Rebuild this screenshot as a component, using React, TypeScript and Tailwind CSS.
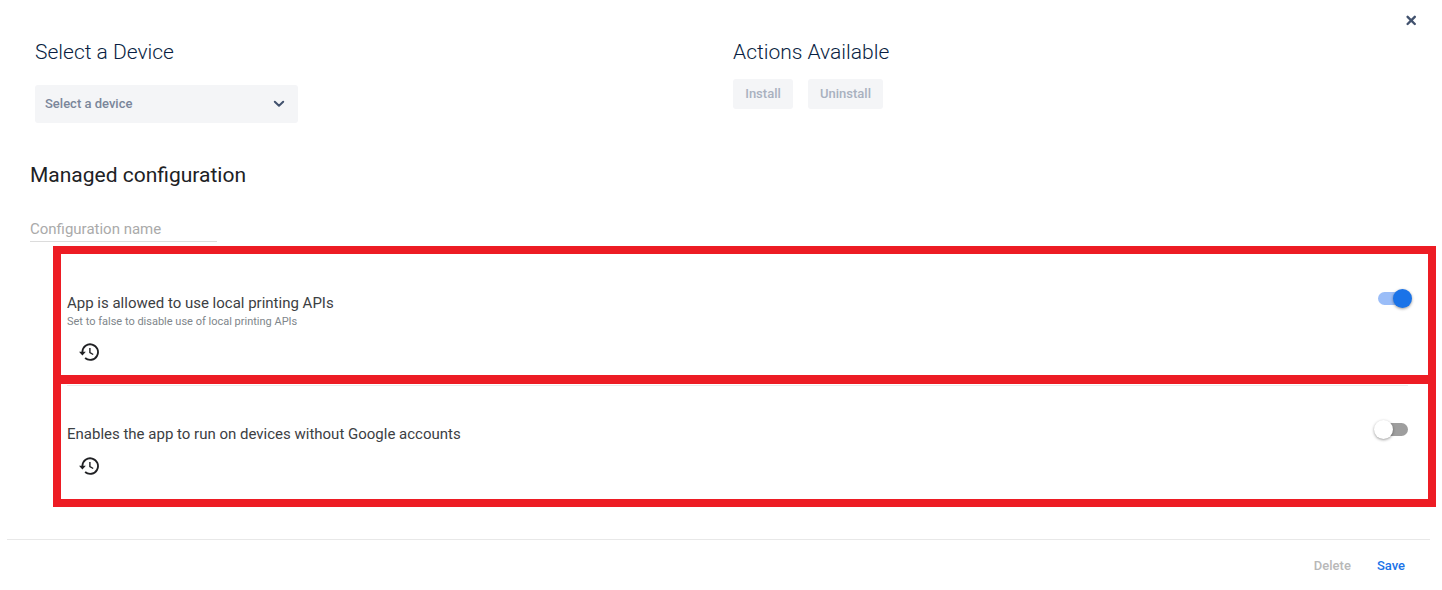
import { useState } from "react";

function HistoryIcon() {
  return (
    <svg viewBox="0 0 20 18" className="h-[18px] w-5" aria-hidden="true" fill="none" stroke="#202124" strokeWidth="1.8">
      <path d="M3.4 9.6V8.8A7.8 7.8 0 1 1 6.1 15" />
      <path d="M0 8.8h6.8L3.4 12.4z" fill="#202124" stroke="none" />
      <path d="M10.9 5v4.5l3.3 2" strokeWidth="1.4" />
    </svg>
  );
}

type SettingProps = {
  id: string;
  title: string;
  description?: string;
  initial: boolean;
};

function Setting({ id, title, description, initial }: SettingProps) {
  const [on, setOn] = useState(initial);
  return (
    <div className="flex items-start justify-between pt-[37px]">
      <div className="pt-px">
        <label htmlFor={id} className="block text-[15px] leading-5 text-[#3c4043]">
          {title}
        </label>
        {description && <p className="mt-px text-[11px] leading-4 text-[#80868b]">{description}</p>}
        <button type="button" aria-label={`Reset ${title}`} className="mt-[13px] ml-3 block">
          <HistoryIcon />
        </button>
      </div>
      <input
        id={id}
        type="checkbox"
        role="switch"
        checked={on}
        onChange={(e) => setOn(e.target.checked)}
        className="relative h-[13px] w-[30px] shrink-0 cursor-pointer appearance-none rounded-full bg-[#9e9e9e] before:absolute before:-top-[3px] before:-left-1 before:size-[19px] before:rounded-full before:bg-white before:shadow-[0_1px_3px_rgba(0,0,0,0.4)] checked:bg-[#9abdf8] checked:before:left-[15px] checked:before:bg-[#1a73e8]"
      />
    </div>
  );
}

export default function App() {
  return (
    <main className="bg-white font-['Roboto',sans-serif]">
      <header className="flex h-10 items-center justify-end pr-6">
        <button type="button" aria-label="Close">
          <svg viewBox="0 0 14 14" className="size-[14px]" fill="none" stroke="#42526e" strokeWidth="2.4" strokeLinecap="round" aria-hidden="true">
            <path d="M3.6 3.8l7.2 7.2M10.8 3.8l-7.2 7.2" />
          </svg>
        </button>
      </header>

      <div className="grid grid-cols-2 pr-[11px] pl-[35px]">
        <section>
          <h2 className="text-[21px] leading-6 font-light text-[#091e42]">
            <label htmlFor="device">Select a Device</label>
          </h2>
          <div className="relative mt-[21px] w-[263px]">
            <select
              id="device"
              className="h-[38px] w-full appearance-none rounded-[3px] bg-[#f4f5f7] px-[10px] text-[13px] font-medium text-[#7a869a]"
            >
              <option>Select a device</option>
            </select>
            <svg viewBox="0 0 12 8" className="pointer-events-none absolute top-[15px] right-[13px] h-2 w-3" fill="none" stroke="#42526e" strokeWidth="2" strokeLinecap="round" strokeLinejoin="round" aria-hidden="true">
              <path d="M1.8 1.8L6 5.8l4.2-4" />
            </svg>
          </div>
        </section>
        <section>
          <h2 className="text-[21px] leading-6 font-light text-[#091e42]">Actions Available</h2>
          <div className="mt-[15px] flex gap-[15px]">
            <button type="button" disabled className="h-[30px] w-[60px] rounded-[3px] bg-[#f4f5f7] text-[13px] font-medium text-[#a9b1bf]">
              Install
            </button>
            <button type="button" disabled className="h-[30px] w-[75px] rounded-[3px] bg-[#f4f5f7] text-[13px] font-medium text-[#a9b1bf]">
              Uninstall
            </button>
          </div>
        </section>
      </div>

      <section className="mt-10">
        <div className="pl-[30px]">
          <h1 className="text-[21px] leading-6 text-[#202124]">Managed configuration</h1>
          <input
            type="text"
            aria-label="Configuration name"
            placeholder="Configuration name"
            className="mt-[30px] block h-[25px] w-[187px] border-b border-[#dcdcdc] text-[15px] text-[#3c4043] outline-none placeholder:text-[#aaaaaa]"
          />
        </div>

        <div className="mt-1 mr-[6px] ml-[53px] border-8 border-[#ed1c24]">
          <div className="h-[121px] pt-px pr-5 pl-[6px]">
            <Setting
              id="printing"
              title="App is allowed to use local printing APIs"
              description="Set to false to disable use of local printing APIs"
              initial={true}
            />
          </div>
          <div className="h-[124px] border-t-[9px] border-[#ed1c24] pt-px pr-5 pl-[6px]">
            <div className="border-t border-[#ebebeb]">
              <Setting id="accounts" title="Enables the app to run on devices without Google accounts" initial={false} />
            </div>
          </div>
        </div>
      </section>

      <footer className="mt-8 mr-3 ml-[7px] flex h-[51px] items-center justify-end gap-[26px] border-t border-[#e8e8e8] pt-px pr-[25px] text-[13px] font-medium">
        <button type="button" disabled className="text-[#b8b8b8]">Delete</button>
        <button type="button" className="text-[#1a73e8]">Save</button>
      </footer>
    </main>
  );
}
